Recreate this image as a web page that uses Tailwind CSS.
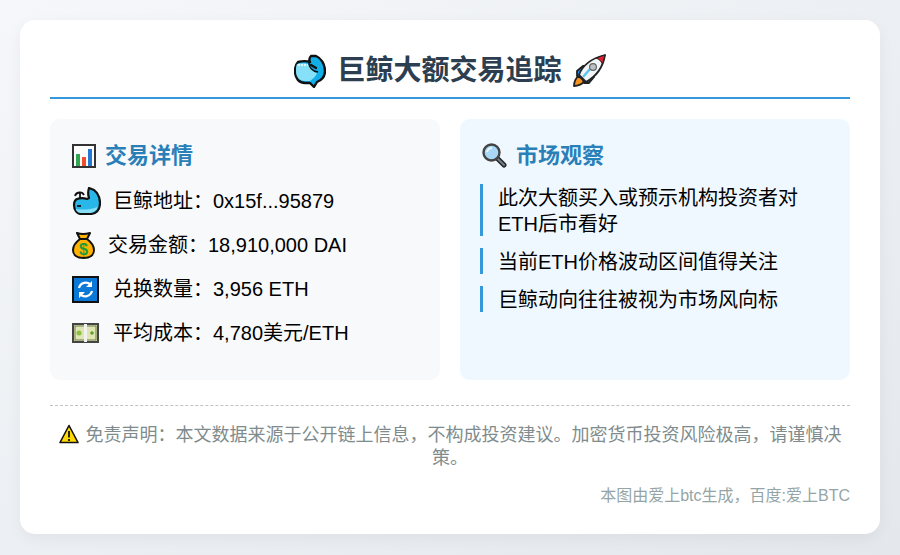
<!DOCTYPE html>
<html lang="zh-CN">
<head>
  <meta charset="UTF-8">
  <title>巨鲸大额交易追踪</title>
  <script src="https://cdn.jsdelivr.net/npm/@tailwindcss/browser@4"></script>
</head>
<body class="h-[555px] w-[900px] overflow-hidden bg-gradient-to-br from-[#f5f7fa] to-[#e4e8ec] p-5 font-['Liberation_Sans','Noto_Sans_CJK_SC',sans-serif] text-black">
  <div class="flex h-[514px] flex-col rounded-[15px] bg-white px-[30px] shadow-[0_5px_15px_rgba(0,0,0,0.05)]">

    <!-- title -->
    <div class="mt-[30px] flex h-[49px] items-center justify-center border-b-2 border-[#3498db] pb-[5px] text-[28px] leading-[40px] font-bold text-[#2c3e50]">
      <svg class="mr-[11px] h-[34px] w-[32px]" viewBox="0 0 32 34">
        <path d="M17 2h5c5 2 9 8 9 15 0 5-3 9-8 11l-3 5-4-4h-5C5 29 1 24 1 17c0-4 1-7 3-9 4-1 9-1 12 0-1-2-1-4 1-6z" fill="#12aee8" stroke="#111" stroke-width="2.400" stroke-linejoin="round"/>
        <path d="M3 10c4-1 9-1 11 0 2 5 5 8 9 9-1 3-4 6-7 8H11C5 27 2 23 2 17c0-3 0-5 1-7z" fill="#86e0f7"/>
        <path d="M4 11h10" stroke="#fff" stroke-width="1.600" stroke-dasharray="2 1"/>
        <path d="M15 9c0 4 3 8 9 9" fill="none" stroke="#111" stroke-width="1.500"/>
        <path d="M17 11l5 3" stroke="#111" stroke-width="2.400" stroke-linecap="round"/>
      </svg>
      <span>巨鲸大额交易追踪</span>
      <svg class="ml-[10px] h-[34px] w-[34px]" viewBox="0 0 34 34">
        <path d="M7 22c-3 1-5 6-5 10 4 0 9-2 10-5z" fill="#f7931e" stroke="#222" stroke-width="1.800" stroke-linejoin="round"/>
        <path d="M5 22l0-5 6-5 5 0-6 11zM12 29l5 0 5-6 0-5-11 6z" fill="#1e88e5" stroke="#222" stroke-width="1.800" stroke-linejoin="round"/>
        <path d="M7 21C11 10 21 4 33 1c-2 12-8 21-19 27z" fill="#f2f5f7" stroke="#222" stroke-width="1.800" stroke-linejoin="round"/>
        <path d="M24 4L33 1l-2.500 9C29 7 27 5 24 4z" fill="#e02030" stroke="#222" stroke-width="1"/>
        <path d="M11 23l7-8" stroke="#56c5f0" stroke-width="2.400"/>
        <circle cx="21" cy="13" r="3.400" fill="#b9c1c6" stroke="#666" stroke-width="1.200"/>
      </svg>
    </div>

    <!-- panels -->
    <div class="mt-[20px] grid h-[261px] grid-cols-2 gap-5">
      <div class="rounded-[10px] bg-[#f8f9fa] pt-[20px] pl-[22px]">
        <div class="flex h-[33px] items-center text-[22px] font-bold text-[#2980b9]">
          <svg class="mr-[9px] h-[24px] w-[24px]" viewBox="0 0 24 24">
            <rect x="1" y="1" width="22" height="22" fill="#fff" stroke="#333" stroke-width="2"/>
            <rect x="4" y="10" width="4" height="12" fill="#2fa84f"/>
            <rect x="10" y="13" width="4" height="9" fill="#ef4f2f"/>
            <rect x="16" y="5" width="4" height="17" fill="#2478d4"/>
          </svg>
          <h3>交易详情</h3>
        </div>
        <ul class="mt-[15px] flex flex-col gap-[16px] text-[20px] leading-[28px]">
          <li class="flex h-[28px] items-center">
            <svg class="mr-[12px] h-[28px] w-[29px]" viewBox="0 0 29 28">
              <path d="M2 18c0-3 1-5 3-6 3-1 7-1 10 0l2-1c-1-3-1-7 0-10l5 2 3 3c2 3 3 6 3 10 0 7-4 11-10 11H9c-4 0-7-4-7-9z" fill="#29b6e8" stroke="#111" stroke-width="2.200" stroke-linejoin="round"/>
              <path d="M3.500 22c6 1 14 1 22-2-1 4-5 6-9 6H9c-2 0-4-1-5.500-4z" fill="#86def5"/>
              <path d="M3 9c1-4 7-5 9-1M8 6v5" fill="none" stroke="#111" stroke-width="1.800"/>
              <path d="M5 19h4" stroke="#111" stroke-width="1.800"/>
            </svg>
            <span>巨鲸地址&#xFF1A;0x15f...95879</span>
          </li>
          <li class="flex h-[28px] items-center">
            <svg class="mr-[13px] h-[28px] w-[23px]" viewBox="0 0 23 28">
              <path d="M5 2c3 1 9 1 13 0l-3 6c4 3 7 7 7 11 0 5-4 8-10.500 8S1 24 1 19c0-4 3-8 7-11z" fill="#ffb300" stroke="#111" stroke-width="2" stroke-linejoin="round"/>
              <path d="M8 8h7" stroke="#111" stroke-width="2"/>
              <text x="11.500" y="24" text-anchor="middle" font-size="16" font-weight="700" fill="#1f9a3c" font-family="Liberation Sans">$</text>
            </svg>
            <span>交易金额&#xFF1A;18,910,000 DAI</span>
          </li>
          <li class="flex h-[28px] items-center">
            <svg class="mr-[14px] h-[27px] w-[27px]" viewBox="0 0 27 27">
              <rect x="1" y="1" width="25" height="25" fill="#0a78d7" stroke="#111" stroke-width="2"/>
              <path d="M7 12a7 7 0 0 1 12-3M20 15a7 7 0 0 1-12 3" fill="none" stroke="#fff" stroke-width="2.200"/>
              <path d="M20 5v6h-6zM7 22v-6h6z" fill="#fff"/>
            </svg>
            <span>兑换数量&#xFF1A;3,956 ETH</span>
          </li>
          <li class="flex h-[28px] items-center">
            <svg class="mr-[14px] h-[20px] w-[27px]" viewBox="0 0 27 20">
              <rect x="1" y="1" width="25" height="18" fill="#dfe6b4" stroke="#444" stroke-width="2"/>
              <rect x="3" y="3" width="21" height="14" fill="none" stroke="#6f7c4a" stroke-width="1"/>
              <circle cx="7" cy="10" r="2.500" fill="#8bbf3f"/><circle cx="20" cy="10" r="1.800" fill="#5f9f2f"/>
              <rect x="12" y="1" width="3" height="18" fill="#f2f2f2"/>
            </svg>
            <span>平均成本&#xFF1A;4,780美元/ETH</span>
          </li>
        </ul>
      </div>

      <div class="rounded-[10px] bg-[#f0f8ff] pt-[20px] pl-[20px] pr-[20px]">
        <div class="flex h-[33px] items-center text-[22px] font-bold text-[#2980b9]">
          <svg class="ml-[2px] mr-[9px] h-[25px] w-[25px]" viewBox="0 0 25 25">
            <path d="M15 15l7 7" stroke="#222" stroke-width="5" stroke-linecap="round"/>
            <path d="M16 16l6 6" stroke="#6d7f88" stroke-width="2.200" stroke-linecap="round"/>
            <circle cx="9.500" cy="9.500" r="8" fill="#a8d8f5" stroke="#444" stroke-width="2.400"/>
            <path d="M5 9c1-3 3-4 5-4" fill="none" stroke="#e8f6ff" stroke-width="2"/>
          </svg>
          <h3>市场观察</h3>
        </div>
        <ul class="mt-[12px] flex flex-col gap-[12px] text-[20px] leading-[26px]">
          <li class="h-[52px] border-l-[3px] border-[#3498db] pt-px pl-[15px]">此次大额买入或预示机构投资者对ETH后市看好</li>
          <li class="h-[26px] border-l-[3px] border-[#3498db] pt-px pl-[15px]">当前ETH价格波动区间值得关注</li>
          <li class="h-[26px] border-l-[3px] border-[#3498db] pt-px pl-[15px]">巨鲸动向往往被视为市场风向标</li>
        </ul>
      </div>
    </div>

    <!-- footer -->
    <div class="mt-[25px] border-t border-dashed border-[#bdc3c7] pt-[18px] text-center text-[18px] leading-[23px] text-[#7f8c8d]">
      <svg class="mr-[7px] mb-[-3px] inline-block h-[20px] w-[20px] align-baseline" viewBox="0 0 20 20">
        <path d="M10 1.500L19 18.500H1z" fill="#ffd800" stroke="#111" stroke-width="1.600" stroke-linejoin="round"/>
        <path d="M10 7v6.500M10 15v2" stroke="#111" stroke-width="1.800"/>
      </svg>免责声明&#xFF1A;本文数据来源于公开链上信息&#xFF0C;不构成投资建议。加密货币投资风险极高&#xFF0C;请谨慎决策。
    </div>
    <div class="mt-[15px] text-right text-[16px] leading-[22px] text-[#95a5a6]">本图由爱上btc生成&#xFF0C;百度:爱上BTC</div>
  </div>
</body>
</html>
